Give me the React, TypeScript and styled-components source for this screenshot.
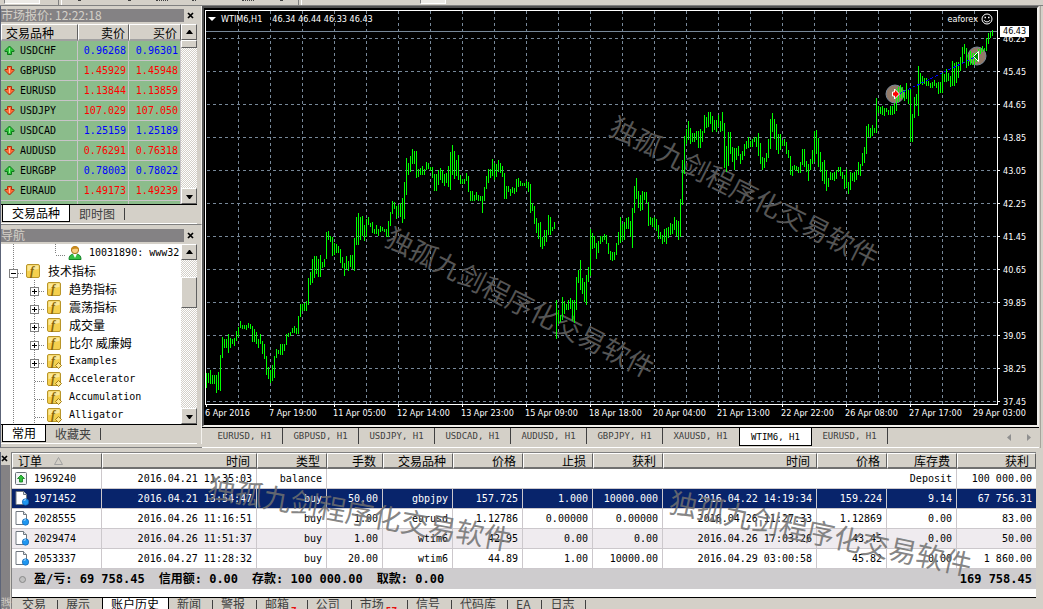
import React from "react";
import styled, { createGlobalStyle, css } from "styled-components";

const face = "#d4d0c8";
const mono = '"DejaVu Sans Mono", "Noto Sans CJK SC", monospace';
const cjk = '"Noto Sans CJK SC", "DejaVu Sans Mono", sans-serif';
const chartFont = '"DejaVu Sans Condensed", "DejaVu Sans", sans-serif';

const GlobalStyle = createGlobalStyle`
  * { box-sizing: border-box; }
  html, body { margin: 0; height: 100%; overflow: hidden; }
  body { background: ${face}; font: 12px/16px ${cjk}; color: #000; }
  button { font: inherit; color: inherit; border: 0; padding: 0; margin: 0; background: none; border-radius: 0; flex: none; }
  table { border-collapse: separate; border-spacing: 0; table-layout: fixed; }
  th { font-weight: 400; }
  th, td { padding: 0; white-space: nowrap; }
  ul { list-style: none; margin: 0; padding: 0; }
  svg { display: block; flex: none; }
`;

const raised = css`
  background: ${face};
  border: 1px solid #fff;
  border-right-color: #606060;
  border-bottom-color: #606060;
`;

/* ---------- window frame ---------- */

const Window = styled.div`
  height: 100vh;
  overflow: hidden;
  background: ${face};
`;

const Toolbar = styled.header`
  display: flex;
  height: 6px;
  padding-left: 4px;
  overflow: hidden;
  border-bottom: 1px solid #808080;
`;

const ToolButton = styled.button<{ $gap?: number; $width: number }>`
  width: ${(p) => p.$width}px;
  height: 4px;
  margin-left: ${(p) => p.$gap ?? 0}px;
  background: #eceae6;
  border: 1px solid #808080;
  border-top: 0;
  border-right-color: #fff;
  border-bottom-color: #fff;
`;

const ToolSeparator = styled.span<{ $gap: number }>`
  width: 4px;
  margin-left: ${(p) => p.$gap}px;
  border-left: 1px solid #808080;
  border-right: 1px solid #fff;
`;

const ToolMark = styled.span<{ $gap: number; $width: number }>`
  width: ${(p) => p.$width}px;
  height: 1px;
  margin-left: ${(p) => p.$gap}px;
  border-top: 1px dotted #404040;
`;

const Workspace = styled.div`
  display: grid;
  grid-template-columns: 202px minmax(0, 1fr);
`;

const Sidebar = styled.aside`
  border-left: 1px solid #5c6478;
  border-bottom: 1px solid #808080;
`;

const Panel = styled.section`
  padding: 3px 4px 0 0;
  border-bottom: 1px solid #808080;
  border-right: 1px solid #f4f2ee;
  &:last-child {
    padding-top: 4px;
    border-bottom: 0;
  }
`;

const TitleBar = styled.div`
  display: flex;
  align-items: center;
  height: 13px;
  margin-bottom: 2px;
`;

const Title = styled.h2`
  flex: 1;
  height: 13px;
  margin: 0;
  font: 400 12px/12px ${cjk};
  color: ${face};
  background: #848284;
`;

const CloseButton = styled.button`
  display: grid;
  place-items: center;
  width: 13px;
  height: 13px;
`;

const PanelBody = styled.div`
  display: flex;
  height: 180px;
  overflow: hidden;
`;

const Clip = styled.div<{ $white?: boolean }>`
  flex: 1;
  min-width: 0;
  overflow: hidden;
  background: ${(p) => (p.$white ? "#fff" : face)};
`;

const Track = styled.div`
  display: flex;
  flex-direction: column;
  width: 16px;
  background: conic-gradient(#fff 25%, #d4d0c8 0 50%, #fff 0 75%, #d4d0c8 0) 0 0 / 2px 2px;
`;

const ScrollButton = styled.button`
  display: grid;
  place-items: center;
  width: 16px;
  height: 16px;
  ${raised}
`;

const Thumb = styled.div<{ $before: number; $size: number }>`
  height: ${(p) => p.$size}px;
  margin-top: ${(p) => p.$before}px;
  margin-bottom: auto;
  ${raised}
`;

const PanelTabs = styled.div`
  display: flex;
  height: 20px;
  padding-left: 1px;
  border-top: 1px solid #000;
  border-bottom: 1px solid #fff;
`;

const PanelTab = styled.button<{ $active?: boolean }>`
  height: 17px;
  padding: 0 9px;
  line-height: 14px;
  color: ${(p) => (p.$active ? "#000" : "#404040")};
  ${(p) =>
    p.$active &&
    css`
      background: #fff;
      border: 1px solid #000;
      border-top: 0;
    `}
`;

const TabDivider = styled.span`
  width: 1px;
  height: 12px;
  margin-top: 3px;
  background: #404040;
`;

/* ---------- market watch ---------- */

const QuoteTable = styled.table`
  width: 100%;
`;

const QuoteHead = styled.th`
  height: 17px;
  padding: 0 3px 0 4px;
  line-height: 13px;
  text-align: right;
  ${raised}
  border-bottom: 2px solid #a0a0a0;
  &:first-child { text-align: left; }
`;

const QuoteCell = styled.td<{ $tone?: string }>`
  height: 20px;
  padding: 0 2px 0 0;
  font: 10px/19px ${mono};
  text-align: right;
  color: ${(p) => p.$tone ?? "#000"};
  background: #8bbc8b;
  border-right: 1px solid #c8c4c8;
  border-bottom: 1px solid #c8c4c8;
`;

const SymbolName = styled.span`
  display: flex;
  align-items: center;
  gap: 5px;
  padding-left: 3px;
`;

/* ---------- navigator ---------- */

const TreeRow = styled.li<{ $level: number }>`
  display: flex;
  align-items: center;
  gap: 7px;
  height: 18px;
  padding-left: ${(p) => p.$level * 21 + 4}px;
  white-space: nowrap;
  background:
    repeating-linear-gradient(#808080 0 1px, transparent 1px 2px) 12px 0 / 1px 100% no-repeat,
    ${(p) =>
      p.$level === 1
        ? "repeating-linear-gradient(#808080 0 1px, transparent 1px 2px) 33px 0 / 1px 100% no-repeat"
        : p.$level === 2
          ? "repeating-linear-gradient(#808080 0 1px, transparent 1px 2px) 54px 0 / 1px 10px no-repeat"
          : "linear-gradient(transparent, transparent)"};
`;

const Branch = styled.span`
  display: flex;
  align-items: center;
  justify-content: flex-end;
  width: 21px;
  height: 18px;
  margin-right: -7px;
  padding: 2px 1px 0 8px;
  background: repeating-linear-gradient(90deg, #808080 0 1px, transparent 1px 2px) 9px 11px / 10px 1px no-repeat;
`;

const Expander = styled.button`
  display: grid;
  place-items: center;
  width: 9px;
  height: 9px;
  margin: 3px auto 0 -4px;
  background: #fff;
  border: 1px solid #808080;
`;

const TreeLabel = styled.span<{ $latin?: boolean }>`
  font: ${(p) => (p.$latin ? `10px/18px ${mono}` : `12px/18px ${cjk}`)};
`;

/* ---------- chart ---------- */

const ChartColumn = styled.main`
  margin-right: 2px;
  padding-right: 1px;
  border-right: 1px solid #a8a49c;
  min-width: 0;
`;

const ChartPanel = styled.section`
  display: grid;
  grid-template-columns: minmax(0, 1fr) 39px;
  padding: 2px 0 0 1px;
  background: #000;
  border: 2px solid #505050;
  border-right-color: #f0eeea;
  border-bottom-color: #f0eeea;
  color: #fff;
  font: 9px/12px ${chartFont};
  overflow: hidden;
`;

const Plot = styled.div`
  position: relative;
  height: 395px;
  border: 1px solid #fff;
  overflow: hidden;
`;

const PlotHeader = styled.div`
  position: absolute;
  inset: 2px 4px auto 2px;
  display: flex;
  align-items: center;
  gap: 5px;
`;

const Quote = styled.span`
  margin-left: 5px;
`;

const Expert = styled.span`
  display: flex;
  align-items: center;
  gap: 3px;
  margin-left: auto;
`;

const PriceAxis = styled.div`
  position: relative;
  height: 395px;
  padding-top: 12px;
`;

const PriceLabel = styled.div`
  display: flex;
  align-items: center;
  gap: 3px;
  height: 33px;
  &::before { content: ""; width: 2px; height: 1px; background: #fff; }
`;

const CurrentPrice = styled.div`
  position: absolute;
  top: 16px;
  left: 2px;
  height: 11px;
  padding: 0 3px;
  line-height: 11px;
  color: #000;
  background: #fff;
`;

const TimeAxis = styled.div`
  grid-column: 1 / -1;
  display: flex;
  height: 20px;
`;

const TimeLabel = styled.span`
  flex: none;
  width: 64px;
  padding-top: 2px;
  white-space: nowrap;
  &::before { content: ""; display: block; width: 1px; height: 2px; margin: -2px 0 0 1px; background: #fff; }
`;

const ChartTabs = styled.nav`
  display: flex;
  height: 21px;
  padding-left: 5px;
  border-top: 1px solid #000;
  border-bottom: 1px solid #fff;
  font: 9px/16px ${mono};
  color: #404040;
`;

const ChartTab = styled.button<{ $active?: boolean; $bare?: boolean }>`
  width: 76px;
  height: 16px;
  border-right: 1px solid ${(p) => (p.$bare ? "transparent" : "#404040")};
  ${(p) =>
    p.$active &&
    css`
      width: 73px;
      height: 18px;
      color: #000;
      background: #fff;
      border: 1px solid #000;
      border-top: 0;
    `}
`;

const TabArrows = styled.span`
  display: flex;
  gap: 12px;
  align-items: center;
  margin-left: auto;
  padding-right: 7px;
`;

/* ---------- terminal ---------- */

const Terminal = styled.section`
  display: grid;
  grid-template-columns: 12px minmax(0, 1fr);
  padding: 3px 7px 0 0;
  border-top: 1px solid ${face};
`;

const TerminalGrip = styled.div`
  display: flex;
  flex-direction: column;
  border-left: 1px solid #5c6478;
  border-right: 1px solid #808080;
`;

const GripCloseButton = styled(CloseButton)`
  width: 5px;
`;

const GripTitle = styled.h2`
  flex: 1;
  margin: 0;
  width: 9px;
  font: 400 10px/9px ${cjk};
  color: ${face};
  background: #848284;
  writing-mode: vertical-rl;
  text-orientation: sideways;
  transform: rotate(180deg);
`;

const TerminalBody = styled.div`
  position: relative;
  background: #fff;
  border-top: 1px solid #808080;
`;

const OrderTable = styled.table`
  width: 100%;
`;

const OrderHead = styled.th`
  height: 16px;
  padding: 0 6px 0 5px;
  line-height: 13px;
  text-align: right;
  ${raised}
  border-bottom: 2px solid #707070;
  &:first-child { text-align: left; }
`;

const HeadLabel = styled.span`
  display: flex;
  align-items: center;
  gap: 12px;
`;

const OrderRow = styled.tr<{ $selected?: boolean; $shaded?: boolean }>`
  color: ${(p) => (p.$selected ? "#fff" : "#000")};
  background: ${(p) => (p.$selected ? "#08246b" : p.$shaded ? "#efebef" : "#fff")};
`;

const OrderCell = styled.td`
  height: 20px;
  padding: 0 4px 0 3px;
  font: 10px/19px ${mono};
  text-align: right;
  border-right: 1px solid #ccc8cc;
  border-bottom: 1px solid #ccc8cc;
  &:last-child { border-right: 0; }
`;

const Ticket = styled.span`
  display: flex;
  align-items: center;
  gap: 5px;
`;

const Summary = styled.div`
  display: flex;
  align-items: center;
  gap: 14px;
  height: 20px;
  padding: 0 4px 0 6px;
  background: #ceccce;
  font: 700 12px/20px ${mono};
  white-space: pre;
`;

const SummaryItem = styled.span<{ $end?: boolean }>`
  margin-left: ${(p) => (p.$end ? "auto" : "0")};
  &:nth-child(2) { margin-left: -7px; }
`;

const TerminalTabs = styled.nav`
  display: flex;
  height: 20px;
  margin-top: 8px;
  padding-left: 2px;
  background: ${face};
  border-top: 1px solid #000;
`;

const TerminalTab = styled.button<{ $active?: boolean; $bare?: boolean }>`
  display: flex;
  align-items: flex-start;
  height: 18px;
  padding-left: 8px;
  line-height: 12px;
  color: #404040;
  &::after {
    content: "";
    width: 1px;
    height: 12px;
    margin: 2px 0 0 11px;
    background: ${(p) => (p.$bare ? "transparent" : "#404040")};
  }
  ${(p) =>
    p.$active &&
    css`
      color: #000;
      background: #fff;
      border: 1px solid #000;
      border-top: 0;
      &::after { width: 0; margin-left: 9px; }
    `}
`;

const Badge = styled.span`
  margin: 7px -1px 0 2px;
  font: 700 9px/12px ${chartFont};
  color: #e81010;
`;

const Watermark = styled.span<{ $left: string; $top: number; $angle: number }>`
  position: absolute;
  left: ${(p) => p.$left};
  top: ${(p) => p.$top}px;
  font: 28px/28px ${cjk};
  color: rgba(112, 112, 112, 0.85);
  white-space: nowrap;
  pointer-events: none;
  transform: translate(-50%, -50%) rotate(${(p) => p.$angle}deg);
`;

/* ---------- icons ---------- */

const CloseIcon = () => (
  <svg width="7" height="7" viewBox="0 0 7 7">
    <path d="M1 1l5 5M6 1l-5 5" stroke="#000" strokeWidth="1.7" />
  </svg>
);

const Chevron = ({ dir }: { dir: "up" | "down" | "left" | "right" }) => {
  const shapes = {
    up: "M0 5h7L4 1H3z",
    down: "M0 2h7L4 6H3z",
    left: "M5 0v7L1 3.5z",
    right: "M2 0v7L6 3.5z",
  };
  const muted = dir === "left" || dir === "right";
  return (
    <svg width="7" height="7" viewBox="0 0 7 7">
      <path d={shapes[dir]} fill={muted ? "#909090" : "#000"} />
    </svg>
  );
};

const TrendIcon = ({ up }: { up: boolean }) => (
  <svg width="11" height="11" viewBox="0 0 11 11">
    <g transform={up ? undefined : "rotate(180 5.5 5.5)"}>
      <path
        d="M5.5 1L10 5.500V6.500H7.500V9.500H3.500V6.500H1V5.500z"
        fill={up ? "#2fc63c" : "#ff7038"}
        stroke={up ? "#0b7a18" : "#b82a08"}
      />
      <path d="M5.5 3v5" stroke={up ? "#9af09a" : "#ffc09a"} />
    </g>
  </svg>
);

const IndicatorIcon = ({ custom }: { custom?: boolean }) => (
  <svg width="15" height="15" viewBox="0 0 15 15">
    <rect x=".5" y=".5" width="13" height="13" rx="1.5" fill="#f5d04e" stroke="#b8952a" />
    <path d="M1.500 7V1.500H12.500V5z" fill="#fbe89a" />
    <text x="4" y="11" fontFamily="Liberation Serif, serif" fontStyle="italic" fontWeight="700" fontSize="12" fill="#8a6508">
      f
    </text>
    {custom && <path d="M11.500 8.500l3 3-3 3-3-3z" fill="#ffe78a" stroke="#a27c14" />}
  </svg>
);

const UserIcon = () => (
  <svg width="14" height="16" viewBox="0 0 14 16">
    <path d="M1 14.500c0-4 2-5.500 6-5.500s6 1.500 6 5.500z" fill="#35c044" stroke="#16842a" />
    <path d="M5 9l2 4 2-4z" fill="#fff" />
    <circle cx="7" cy="5" r="3.6" fill="#f8cf82" stroke="#a8701c" />
    <path d="M3 5c0-5 8-5 8 0C9 3 6 4 3 5z" fill="#c98a1c" />
  </svg>
);

const OrderIcon = () => (
  <svg width="14" height="15" viewBox="0 0 14 15">
    <path d="M1 .5H8.500L11.500 3.500V13.500H1z" fill="#fff" stroke="#707880" />
    <path d="M8.500 .5v3h3" fill="#dde2e8" stroke="#707880" />
    <circle cx="10.5" cy="11" r="3.2" fill="#1e96f0" stroke="#0b62b4" strokeWidth=".7" />
    <path d="M9 10c0-1 1-1.500 2-1.200" stroke="#bfe4ff" fill="none" />
  </svg>
);

const BalanceIcon = () => (
  <svg width="14" height="15" viewBox="0 0 14 15">
    <rect x=".5" y="1.5" width="11" height="12" rx="1" fill="#f2f4f6" stroke="#687078" />
    <path d="M6 4l3.500 3.500H7.500V11h-3V7.500h-2z" fill="#2fbf3a" stroke="#0b7a18" strokeWidth=".8" />
  </svg>
);

const Smiley = () => (
  <svg width="12" height="12" viewBox="0 0 12 12" fill="none" stroke="#fff">
    <circle cx="6" cy="6" r="5" />
    <path d="M3 7c1 2.500 5 2.500 6 0" />
    <path d="M3.500 4.500h1.500M7 4.500h1.500" strokeWidth="1.5" />
  </svg>
);

/* ---------- data ---------- */

const quotes: [string, string, string, boolean][] = [
  ["USDCHF", "0.96268", "0.96301", true],
  ["GBPUSD", "1.45929", "1.45948", false],
  ["EURUSD", "1.13844", "1.13859", false],
  ["USDJPY", "107.029", "107.050", false],
  ["USDCAD", "1.25159", "1.25189", true],
  ["AUDUSD", "0.76291", "0.76318", false],
  ["EURGBP", "0.78003", "0.78022", true],
  ["EURAUD", "1.49173", "1.49239", false],
];

const groups = ["趋势指标", "震荡指标", "成交量", "比尔 威廉姆"];
const customs = ["Accelerator", "Accumulation", "Alligator"];

const prices = ["46.25", "45.45", "44.65", "43.85", "43.05", "42.25", "41.45", "40.65", "39.85", "39.05", "38.25", "37.45"];
const times = [
  "6 Apr 2016", "7 Apr 19:00", "11 Apr 05:00", "12 Apr 14:00", "13 Apr 23:00", "15 Apr 09:00", "18 Apr 18:00",
  "20 Apr 04:00", "21 Apr 13:00", "22 Apr 22:00", "26 Apr 08:00", "27 Apr 17:00", "29 Apr 03:00",
];
const chartTabs = ["EURUSD", "GBPUSD", "USDJPY", "USDCAD", "AUDUSD", "GBPJPY", "XAUUSD", "WTIM6", "EURUSD"];

// High-low range of every hourly bar, oldest first.
const bars = `
373-388 373-383 370-384 375-384 375-384 375-393 372-390 355-391 337-358 339-348 339-348 334-353 338-348 339-344
338-346 331-341 327-337 321-328 325-329 325-329 325-330 323-328 324-329 326-342 329-342 332-344 339-348 334-344
341-354 344-359 356-375 367-379 370-383 365-381 356-378 349-358 350-354 344-355 344-355 344-351 334-345 333-337
332-336 328-333 326-333 328-334 316-334 304-317 304-311 303-311 301-311 278-305 272-285 259-283 256-278 256-274
259-277 255-277 262-268 259-267 232-259 231-240 236-242 237-256 243-255 244-253 246-253 249-263 257-268 263-276
256-269 261-271 255-267 255-269 238-271 217-245 213-245 217-240 216-236 225-241 219-237 217-225 223-227 222-233
229-234 225-234 229-236 226-232 227-231 229-232 229-237 221-237 212-226 201-214 202-209 206-219 205-216 203-217
198-223 182-219 158-195 163-175 156-172 149-164 151-164 151-178 169-177 168-175 166-175 169-175 162-170 163-169
167-171 167-178 174-191 174-191 170-185 168-180 170-183 174-186 173-183 166-187 152-190 145-175 151-179 160-176
155-180 175-184 179-184 179-184 173-181 176-192 191-201 191-201 195-201 192-200 195-201 196-201 196-213 187-201
176-189 169-183 169-178 159-176 163-180 164-177 160-172 163-173 166-177 173-199 186-199 186-192 189-196 187-193
188-194 179-192 178-187 181-186 183-186 183-186 181-188 182-192 184-213 203-211 206-224 218-233 223-239 222-247
237-249 230-246 230-242 215-235 217-235 227-231 222-229 300-339 310-324 315-322 297-320 301-314 304-310 300-310
298-309 300-321 300-323 277-310 270-283 260-290 278-294 282-302 275-305 267-282 229-276 233-249 236-248 243-259
241-253 236-244 236-242 234-240 235-244 243-254 251-260 252-261 252-260 243-255 232-245 217-243 224-241 222-240
218-229 217-229 221-237 208-248 186-213 178-199 191-208 195-211 191-210 192-200 192-203 202-226 217-225 218-227
217-228 219-231 225-239 232-239 235-244 229-242 228-244 227-238 223-235 224-234 217-230 220-236 221-240 199-237
160-205 136-174 129-144 121-140 128-144 133-142 133-142 131-140 131-148 129-148 131-142 115-133 117-128 112-127
112-124 116-132 120-130 120-132 115-127 121-132 112-131 123-168 146-172 132-166 132-154 147-162 148-170 148-160
146-156 154-164 151-160 144-156 141-149 137-148 141-147 139-147 137-142 137-147 133-156 143-164 157-170 158-168
153-162 139-158 119-149 113-132 119-139 124-150 134-154 134-150 140-146 139-146 142-154 150-158 156-175 166-176
165-170 166-171 167-173 162-173 149-165 149-167 161-172 164-181 159-170 150-164 131-162 130-154 138-167 152-172
162-181 160-184 170-191 178-187 172-180 173-180 172-181 170-179 167-172 167-176 172-179 175-189 169-187 182-194
172-190 173-181 172-182 170-180 162-175 164-176 153-166 147-163 126-154 124-137 128-138 125-136 128-133 98-133
106-113 107-114 106-115 108-116 108-112 110-115 106-115 106-115 103-114 89-111 87-102 85-98 87-99 90-101 83-99
89-104 89-142 114-142 97-118 94-106 66-116 73-84 76-85 78-84 78-86 81-86 83-88 82-88 80-86 83-88 82-94 82-93
73-93 74-82 69-82 73-81 76-87 61-86 63-86 62-83 62-78 57-71 47-63 44-54 48-68 54-66 51-65 53-65 53-65 52-62
49-55 48-54 46-52 48-51 38-51 33-44 32-38 30-36`
  .trim()
  .split(/\s+/)
  .map((b) => b.split("-").map(Number));

const barPath = bars.map(([hi, lo], i) => `M${206 + i * 2} ${hi}h1v${lo - hi}h-1z`).join("");
const brand = "独孤九剑程序化交易软件";

const columns: [string, number | undefined][] = [
  ["订单", 90], ["时间", 155], ["类型", 70], ["手数", 56], ["交易品种", 70], ["价格", 70],
  ["止损", 70], ["获利", 70], ["时间", undefined], ["价格", 70], ["库存费", 70], ["获利", 79],
];

const orders = [
  ["1971452", "2016.04.21 13:54:47", "buy", "50.00", "gbpjpy", "157.725", "1.000", "10000.000", "2016.04.22 14:19:34", "159.224", "9.14", "67 756.31"],
  ["2028555", "2016.04.26 11:16:51", "buy", "1.00", "eurusd", "1.12786", "0.00000", "0.00000", "2016.04.26 11:27:33", "1.12869", "0.00", "83.00"],
  ["2029474", "2016.04.26 11:51:37", "buy", "1.00", "wtim6", "42.95", "0.00", "0.00", "2016.04.26 17:03:26", "43.45", "0.00", "50.00"],
  ["2053337", "2016.04.27 11:28:32", "buy", "20.00", "wtim6", "44.89", "1.00", "10000.00", "2016.04.29 03:00:58", "45.82", "0.00", "1 860.00"],
];

const terminalTabs: [string, string?][] = [
  ["交易"], ["展示"], ["账户历史"], ["新闻"], ["警报"], ["邮箱", "7"], ["公司"], ["市场", "57"], ["信号"], ["代码库"], ["EA"], ["日志"],
];

/* ---------- parts ---------- */

const Scrollbar = ({ before, size }: { before: number; size: number }) => (
  <Track>
    <ScrollButton aria-label="Scroll up"><Chevron dir="up" /></ScrollButton>
    <Thumb $before={before} $size={size} />
    <ScrollButton aria-label="Scroll down"><Chevron dir="down" /></ScrollButton>
  </Track>
);

const PanelTitle = ({ children }: { children: React.ReactNode }) => (
  <TitleBar>
    <Title>{children}</Title>
    <CloseButton aria-label="Close"><CloseIcon /></CloseButton>
  </TitleBar>
);

const MarketWatch = () => (
  <Panel>
    <PanelTitle>市场报价: 12:22:18</PanelTitle>
    <PanelBody>
      <Clip>
        <QuoteTable>
          <colgroup><col /><col width="51" /><col width="52" /></colgroup>
          <thead>
            <tr><QuoteHead>交易品种</QuoteHead><QuoteHead>卖价</QuoteHead><QuoteHead>买价</QuoteHead></tr>
          </thead>
          <tbody>
            {quotes.map(([name, bid, ask, up]) => (
              <tr key={name}>
                <QuoteCell><SymbolName><TrendIcon up={up} />{name}</SymbolName></QuoteCell>
                <QuoteCell $tone={up ? "#00f" : "#f00"}>{bid}</QuoteCell>
                <QuoteCell $tone={up ? "#00f" : "#f00"}>{ask}</QuoteCell>
              </tr>
            ))}
            <tr><QuoteCell /><QuoteCell /><QuoteCell /></tr>
          </tbody>
        </QuoteTable>
      </Clip>
      <Scrollbar before={0} size={8} />
    </PanelBody>
    <PanelTabs>
      <PanelTab $active>交易品种</PanelTab>
      <PanelTab>即时图</PanelTab>
      <TabDivider />
    </PanelTabs>
  </Panel>
);

const Expand = ({ open }: { open?: boolean }) => (
  <Expander aria-label={open ? "Collapse" : "Expand"}>
    <svg width="5" height="5" viewBox="0 0 5 5" fill="#000">
      <path d={open ? "M0 2h5v1H0z" : "M0 2h2V0h1v2h2v1H3v2H2V3H0z"} />
    </svg>
  </Expander>
);

const Navigator = () => (
  <Panel>
    <PanelTitle>导航</PanelTitle>
    <PanelBody>
      <Clip $white>
        <ul>
          <TreeRow $level={2}>
            <Branch /><UserIcon /><TreeLabel $latin>10031890: www32</TreeLabel>
          </TreeRow>
          <TreeRow $level={0}>
            <Branch><Expand open /></Branch><IndicatorIcon /><TreeLabel>技术指标</TreeLabel>
          </TreeRow>
          {groups.map((name) => (
            <TreeRow key={name} $level={1}>
              <Branch><Expand /></Branch><IndicatorIcon /><TreeLabel>{name}</TreeLabel>
            </TreeRow>
          ))}
          <TreeRow $level={1}>
            <Branch><Expand /></Branch><IndicatorIcon custom /><TreeLabel $latin>Examples</TreeLabel>
          </TreeRow>
          {customs.map((name) => (
            <TreeRow key={name} $level={1}>
              <Branch /><IndicatorIcon custom /><TreeLabel $latin>{name}</TreeLabel>
            </TreeRow>
          ))}
        </ul>
      </Clip>
      <Scrollbar before={17} size={31} />
    </PanelBody>
    <PanelTabs>
      <PanelTab $active>常用</PanelTab>
      <PanelTab>收藏夹</PanelTab>
      <TabDivider />
    </PanelTabs>
  </Panel>
);

const Chart = () => (
  <ChartPanel>
    <Plot>
      <svg width="100%" height="393" shapeRendering="crispEdges">
        <g transform="translate(-206 -11)">
          <g stroke="#778899" strokeDasharray="3 3">
            {Array.from({ length: 60 }, (_, i) => (
              <path key={i} d={`M${238.5 + i * 32} 11V404`} />
            ))}
            {prices.map((p, i) => (
              <path key={p} d={`M207 ${38.5 + i * 33}H2200`} />
            ))}
          </g>
          <path d="M206 31.500H2200" stroke="#778899" />
          <g fontFamily="Noto Sans CJK SC, sans-serif" fontSize="27" fill="#555" textAnchor="middle">
            <text transform="translate(744 192) rotate(27)" y="10">{brand}</text>
            <text transform="translate(520 303) rotate(27)" y="10">{brand}</text>
          </g>
          <g fill="#927a68" stroke="#778899" shapeRendering="auto">
            <circle cx="895" cy="94" r="9" />
            <circle cx="977" cy="56" r="9" />
          </g>
          <path d={barPath} fill="#0f0" />
          <path d="M899 94L975 57" stroke="#00f" strokeDasharray="3 2" />
          <g stroke="#fff" shapeRendering="auto">
            <path d="M892.500 92h2v-3l5 5-5 5v-3h-2z" fill="#f00" />
            <path d="M978.500 51.500v10l-5-5z" fill="#008a00" />
          </g>
        </g>
      </svg>
      <PlotHeader>
        <svg width="8" height="5" viewBox="0 0 8 5"><path d="M0 0h8L4 4z" fill="#fff" /></svg>
        <span>WTIM6,H1</span>
        <Quote>46.34 46.44 46.33 46.43</Quote>
        <Expert>eaforex <Smiley /></Expert>
      </PlotHeader>
    </Plot>
    <PriceAxis>
      {prices.map((p) => <PriceLabel key={p}>{p}</PriceLabel>)}
      <CurrentPrice>46.43</CurrentPrice>
    </PriceAxis>
    <TimeAxis>{times.map((t) => <TimeLabel key={t}>{t}</TimeLabel>)}</TimeAxis>
  </ChartPanel>
);

const TerminalPanel = () => (
  <Terminal>
    <TerminalGrip>
      <GripCloseButton aria-label="Close"><CloseIcon /></GripCloseButton>
      <GripTitle>终端</GripTitle>
    </TerminalGrip>
    <TerminalBody>
      <OrderTable>
        <colgroup>{columns.map(([, w], i) => <col key={i} width={w} />)}</colgroup>
        <thead>
          <tr>
            {columns.map(([name], i) => (
              <OrderHead key={i}>
                {i === 0 ? (
                  <HeadLabel>
                    {name}
                    <svg width="9" height="8" viewBox="0 0 9 8"><path d="M.5 7.500h8l-4-7z" fill="none" stroke="#a0a0a0" /></svg>
                  </HeadLabel>
                ) : name}
              </OrderHead>
            ))}
          </tr>
        </thead>
        <tbody>
          <OrderRow>
            <OrderCell><Ticket><BalanceIcon />1969240</Ticket></OrderCell>
            <OrderCell>2016.04.21 11:35:03</OrderCell>
            <OrderCell>balance</OrderCell>
            <OrderCell colSpan={8}>Deposit</OrderCell>
            <OrderCell>100 000.00</OrderCell>
          </OrderRow>
          {orders.map((o, r) => (
            <OrderRow key={o[0]} $selected={r === 0} $shaded={r === 2}>
              {o.map((v, c) => (
                <OrderCell key={c}>{c === 0 ? <Ticket><OrderIcon />{v}</Ticket> : v}</OrderCell>
              ))}
            </OrderRow>
          ))}
        </tbody>
      </OrderTable>
      <Summary>
        <svg width="9" height="9" viewBox="0 0 9 9"><circle cx="4.5" cy="4.5" r="3" fill="#c0c0c0" stroke="#888" /></svg>
        <SummaryItem>盈/亏: 69 758.45</SummaryItem>
        <SummaryItem>信用额: 0.00</SummaryItem>
        <SummaryItem>存款: 100 000.00</SummaryItem>
        <SummaryItem>取款: 0.00</SummaryItem>
        <SummaryItem $end>169 758.45</SummaryItem>
      </Summary>
      <TerminalTabs>
        {terminalTabs.map(([name, count], i) => (
          <TerminalTab key={name} $active={i === 2} $bare={i === 1}>
            {name}
            {count && <Badge>{count}</Badge>}
          </TerminalTab>
        ))}
      </TerminalTabs>
      <Watermark $left="34%" $top={59} $angle={10}>{brand}</Watermark>
      <Watermark $left="79%" $top={79} $angle={12}>{brand}</Watermark>
    </TerminalBody>
  </Terminal>
);

export default function App() {
  return (
    <Window>
      <GlobalStyle />
      <Toolbar>
        <ToolButton $width={36} aria-label="Tool" />
        <ToolSeparator $gap={18} />
        <ToolMark $gap={16} $width={2} />
        <ToolMark $gap={48} $width={2} />
        <ToolMark $gap={26} $width={12} />
        <ToolMark $gap={24} $width={4} />
        <ToolMark $gap={46} $width={12} />
        <ToolMark $gap={26} $width={2} />
        <ToolSeparator $gap={16} />
        <ToolButton $gap={118} $width={26} aria-label="Tool" />
      </Toolbar>
      <Workspace>
        <Sidebar>
          <MarketWatch />
          <Navigator />
        </Sidebar>
        <ChartColumn>
          <Chart />
          <ChartTabs>
            {chartTabs.map((name, i) => (
              <ChartTab key={i} $active={i === 7} $bare={i === 6}>{name}, H1</ChartTab>
            ))}
            <TabArrows><Chevron dir="left" /><Chevron dir="right" /></TabArrows>
          </ChartTabs>
        </ChartColumn>
      </Workspace>
      <TerminalPanel />
    </Window>
  );
}
